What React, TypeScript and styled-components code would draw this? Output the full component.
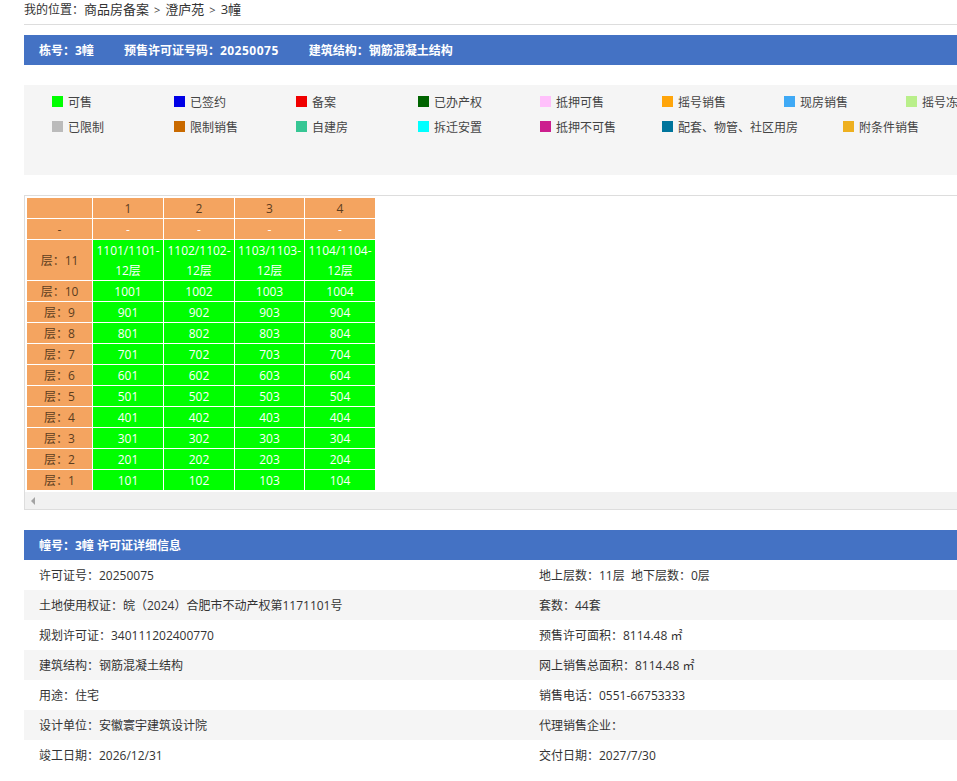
import React from "react";
import styled, { createGlobalStyle } from "styled-components";

const GlobalStyle = createGlobalStyle`
  html, body {
    margin: 0;
    padding: 0;
    overflow: hidden;
    background: #fff;
  }
  body {
    font-family: "Open Sans", "Noto Sans CJK SC", sans-serif;
    font-size: 12px;
    color: #333;
  }
`;

const legendRows = [
  [
    { name: "可售", color: "#00ff00" },
    { name: "已签约", color: "#0000e6" },
    { name: "备案", color: "#f00000" },
    { name: "已办产权", color: "#006400" },
    { name: "抵押可售", color: "#ffc0fb" },
    { name: "摇号销售", color: "#ffa50a" },
    { name: "现房销售", color: "#3fa9f5" },
    { name: "摇号冻结", color: "#b9ef8a" },
  ],
  [
    { name: "已限制", color: "#bbbbbb" },
    { name: "限制销售", color: "#c96a00" },
    { name: "自建房", color: "#36c694" },
    { name: "拆迁安置", color: "#00ffff" },
    { name: "抵押不可售", color: "#cc1e8e" },
    { name: "配套、物管、社区用房", color: "#00759c" },
    { name: "附条件销售", color: "#eeb020" },
  ],
];

const floors = [10, 9, 8, 7, 6, 5, 4, 3, 2, 1];
const units = [1, 2, 3, 4];

const details = [
  ["许可证号：20250075", "地上层数：11层  地下层数：0层"],
  ["土地使用权证：皖（2024）合肥市不动产权第1171101号", "套数：44套"],
  ["规划许可证：340111202400770", "预售许可面积：8114.48 ㎡"],
  ["建筑结构：钢筋混凝土结构", "网上销售总面积：8114.48 ㎡"],
  ["用途：住宅", "销售电话：0551-66753333"],
  ["设计单位：安徽寰宇建筑设计院", "代理销售企业："],
  ["竣工日期：2026/12/31", "交付日期：2027/7/30"],
];

const App: React.FC = () => {
  return (
    <>
      <GlobalStyle />
      <Page>
        <Crumbs>
          我的位置：
          <CrumbLink>商品房备案</CrumbLink>
          <Sep>&gt;</Sep>
          <CrumbLink>澄庐苑</CrumbLink>
          <Sep>&gt;</Sep>
          <CrumbLink>3幢</CrumbLink>
        </Crumbs>

        <TitleBar>
          <span>栋号：3幢</span>
          <span>
            预售许可证号码：<TitleNumber>20250075</TitleNumber>
          </span>
          <span>建筑结构：钢筋混凝土结构</span>
        </TitleBar>

        <Legend>
          {legendRows.map((row, i) => (
            <LegendRow key={i}>
              {row.map((item) => (
                <LegendItem key={item.name}>
                  <Swatch color={item.color} />
                  {item.name}
                </LegendItem>
              ))}
            </LegendRow>
          ))}
        </Legend>

        <TableBox>
          <FloorTable>
            <colgroup>
              <FloorCol />
              <UnitCol />
              <UnitCol />
              <UnitCol $narrow />
              <UnitCol />
            </colgroup>
            <tbody>
              <tr>
                <HeadCell />
                {units.map((u) => (
                  <HeadCell key={u}>
                    <CellText>{u}</CellText>
                  </HeadCell>
                ))}
              </tr>
              <tr>
                <HeadCell>
                  <CellText>-</CellText>
                </HeadCell>
                {units.map((u) => (
                  <HeadCell key={u} $light>
                    <CellText>-</CellText>
                  </HeadCell>
                ))}
              </tr>
              <tr>
                <HeadCell>
                  <CellText>层：11</CellText>
                </HeadCell>
                {units.map((u) => (
                  <RoomCell key={u}>
                    <CellText>{`110${u}/110${u}-12层`}</CellText>
                  </RoomCell>
                ))}
              </tr>
              {floors.map((f) => (
                <tr key={f}>
                  <HeadCell>
                    <CellText>{`层：${f}`}</CellText>
                  </HeadCell>
                  {units.map((u) => (
                    <RoomCell key={u}>
                      <CellText>{`${f}0${u}`}</CellText>
                    </RoomCell>
                  ))}
                </tr>
              ))}
            </tbody>
          </FloorTable>
          <ScrollTrack>
            <ScrollArrow />
          </ScrollTrack>
        </TableBox>

        <SectionBar>幢号：3幢 许可证详细信息</SectionBar>
        {details.map(([left, right], i) => (
          <InfoRow key={i} $striped={i % 2 === 1}>
            <InfoCell>{left}</InfoCell>
            <InfoCell>{right}</InfoCell>
          </InfoRow>
        ))}
      </Page>
    </>
  );
};

const Page = styled.div`
  width: 1000px;
  margin-left: 24px;
  padding-bottom: 20px;
`;

const Crumbs = styled.div`
  height: 24px;
  line-height: 19px;
  border-bottom: 1px solid #dddddd;
`;

const CrumbLink = styled.span`
  font-size: 13px;
`;

const Sep = styled.span`
  margin: 0 5px;
  font-size: 11px;
  color: #444;
`;

const TitleBar = styled.div`
  display: flex;
  gap: 30px;
  height: 30px;
  margin-top: 10px;
  padding-left: 15px;
  align-items: center;
  background: #4472c4;
  color: #fff;
  font-weight: 700;
`;

const TitleNumber = styled.span`
  letter-spacing: 0.5px;
`;

const Legend = styled.div`
  height: 86px;
  margin-top: 20px;
  padding: 4px 0 0 28px;
  background: #f5f5f5;
`;

const LegendRow = styled.div`
  display: flex;
  height: 25px;
  white-space: nowrap;
`;

const LegendItem = styled.div`
  display: flex;
  align-items: center;
  flex: none;
  box-sizing: border-box;
  min-width: 122px;
  padding-right: 45px;
  color: #444;
`;

const Swatch = styled.i<{ color: string }>`
  display: block;
  width: 11px;
  height: 11px;
  margin-right: 5px;
  background: ${(props) => props.color};
`;

const TableBox = styled.div`
  margin-top: 20px;
  padding: 1px;
  border: 1px solid #dddddd;
`;

const FloorTable = styled.table`
  border-collapse: separate;
  border-spacing: 1px;
  table-layout: fixed;
  width: 350px;
`;

const FloorCol = styled.col`
  width: 65px;
`;

const UnitCol = styled.col<{ $narrow?: boolean }>`
  width: ${(props) => (props.$narrow ? "69px" : "70px")};
`;

const HeadCell = styled.td<{ $light?: boolean }>`
  padding: 0;
  height: 20px;
  text-align: center;
  background: #f4a460;
  color: ${(props) => (props.$light ? "#fff" : "#5c3d1e")};
`;

const RoomCell = styled.td`
  padding: 0;
  height: 20px;
  text-align: center;
  background: #00ff00;
  color: #fff;
`;

const CellText = styled.div`
  margin: 1px 0 -1px;
  line-height: 20px;
`;

const ScrollTrack = styled.div`
  display: flex;
  align-items: center;
  height: 17px;
  margin: 1px -1px -1px;
  padding-left: 6px;
  background: #f1f1f1;
`;

const ScrollArrow = styled.span`
  width: 0;
  height: 0;
  border-top: 4px solid transparent;
  border-bottom: 4px solid transparent;
  border-right: 4px solid #a3a3a3;
`;

const SectionBar = styled.div`
  height: 30px;
  margin-top: 20px;
  padding-left: 15px;
  line-height: 32px;
  background: #4472c4;
  color: #fff;
  font-weight: 700;
`;

const InfoRow = styled.div<{ $striped: boolean }>`
  display: grid;
  grid-template-columns: 500px 500px;
  height: 30px;
  line-height: 32px;
  background: ${(props) => (props.$striped ? "#f5f5f5" : "#fff")};
`;

const InfoCell = styled.div`
  padding-left: 15px;
  white-space: pre;
`;

export default App;
